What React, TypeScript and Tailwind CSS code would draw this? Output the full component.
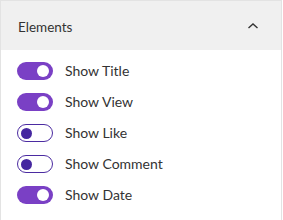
import { useState } from 'react'

const items = [
  { label: 'Show Title', on: true },
  { label: 'Show View', on: true },
  { label: 'Show Like', on: false },
  { label: 'Show Comment', on: false },
  { label: 'Show Date', on: true },
]

const Toggle = ({ on, onClick }: { on: boolean; onClick: () => void }) => {
  return (
    <button
      onClick={onClick}
      className={
        on
          ? 'flex items-center justify-end w-[36px] h-[18px] rounded-full bg-[#7a40c5] px-[4px]'
          : 'flex items-center justify-start w-[36px] h-[18px] rounded-full border border-[#4b2ba1] bg-white px-[3px]'
      }
    >
      <span
        className={
          on
            ? 'block w-[12px] h-[12px] rounded-full bg-white'
            : 'block w-[11px] h-[11px] rounded-full bg-[#4527a0]'
        }
      />
    </button>
  )
}

const App = () => {
  const [state, setState] = useState(items.map((i) => i.on))

  return (
    <main className="w-[283px] h-[220px] bg-white font-['Lato','Noto_Sans',sans-serif] text-[#333333] overflow-hidden">
      <div className="w-[282px] h-[230px] border border-[#e3e3e3]">
        <div className="flex items-center justify-between h-[49px] bg-[#f0f0f0] pl-[17px] pr-[22px]">
          <span className="text-[13.5px] leading-none mt-[4px]">Elements</span>
          <svg width="12" height="8" viewBox="0 0 12 8" className="mt-[1px]">
            <polyline points="1.5,6 6,2 10.5,6" fill="none" stroke="#333" strokeWidth="1.4" />
          </svg>
        </div>
        <div className="flex flex-col gap-[13px] pt-[12px] pl-[16px]">
          {items.map((item, i) => (
            <div key={item.label} className="flex items-center gap-[12px] h-[18px]">
              <Toggle
                on={state[i]}
                onClick={() => setState(state.map((v, j) => (j === i ? !v : v)))}
              />
              <span className="text-[14px] leading-none">{item.label}</span>
            </div>
          ))}
        </div>
      </div>
    </main>
  )
}

export default App
